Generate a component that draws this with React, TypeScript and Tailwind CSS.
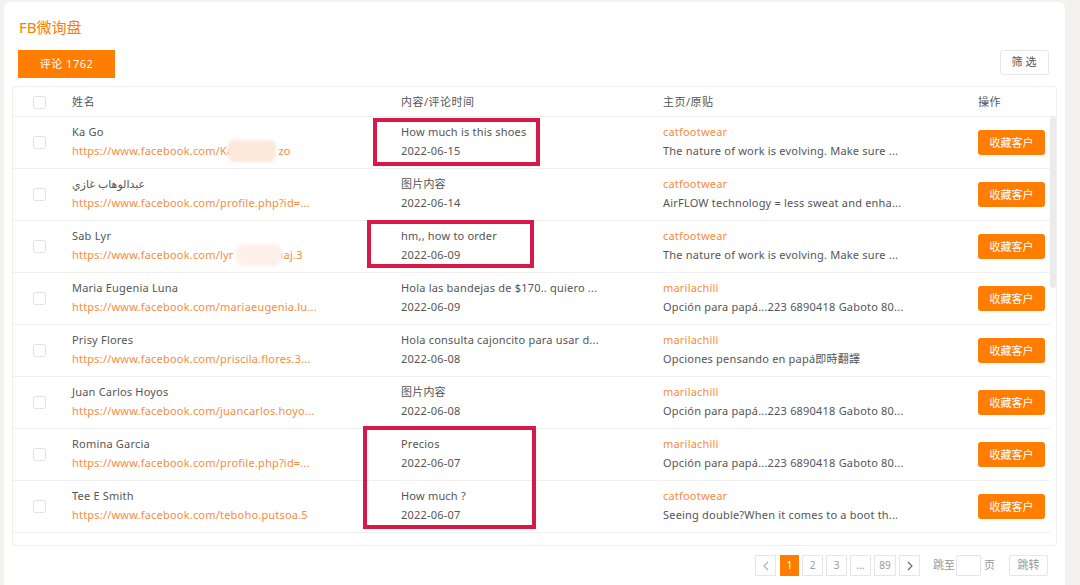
import React from 'react';

type Row = {
  name: string;
  url: React.ReactNode;
  content: string;
  date: string;
  page: string;
  post: string;
};

// hidden part of a profile url (covered by a blur patch in the screenshot)
const Gap = ({ w }: { w: string }) => <span className={`inline-block ${w}`} />;

const ROWS: Row[] = [
  { name: 'Ka Go', url: <>https://www.facebook.com/Ka<Gap w="w-[45px]" />zo</>, content: 'How much is this shoes', date: '2022-06-15', page: 'catfootwear', post: 'The nature of work is evolving. Make sure ...' },
  { name: 'عبدالوهاب غازي', url: 'https://www.facebook.com/profile.php?id=...', content: '图片内容', date: '2022-06-14', page: 'catfootwear', post: 'AirFLOW technology = less sweat and enha...' },
  { name: 'Sab Lyr', url: <>https://www.facebook.com/lyr<Gap w="w-[43px]" />naj.3</>, content: 'hm,, how to order', date: '2022-06-09', page: 'catfootwear', post: 'The nature of work is evolving. Make sure ...' },
  { name: 'Maria Eugenia Luna', url: 'https://www.facebook.com/mariaeugenia.lu...', content: 'Hola las bandejas de $170.. quiero ...', date: '2022-06-09', page: 'marilachili', post: 'Opción para papá...223 6890418 Gaboto 80...' },
  { name: 'Prisy Flores', url: 'https://www.facebook.com/priscila.flores.3...', content: 'Hola consulta cajoncito para usar d...', date: '2022-06-08', page: 'marilachili', post: 'Opciones pensando en papá即時翻譯' },
  { name: 'Juan Carlos Hoyos', url: 'https://www.facebook.com/juancarlos.hoyo...', content: '图片内容', date: '2022-06-08', page: 'marilachili', post: 'Opción para papá...223 6890418 Gaboto 80...' },
  { name: 'Romina Garcia', url: 'https://www.facebook.com/profile.php?id=...', content: 'Precios', date: '2022-06-07', page: 'marilachili', post: 'Opción para papá...223 6890418 Gaboto 80...' },
  { name: 'Tee E Smith', url: 'https://www.facebook.com/teboho.putsoa.5', content: 'How much ?', date: '2022-06-07', page: 'catfootwear', post: 'Seeing double?When it comes to a boot th...' },
];

const cols = 'grid grid-cols-[59px_329px_262px_315px_1fr]';

const Checkbox = () => (
  <span className="block h-[13px] w-[13px] rounded-[2px] border border-[#e3e3e3] bg-white" />
);

export default function App() {
  return (
    <div className="relative h-[585px] w-[1080px] overflow-hidden bg-[#f4f2ee] pl-[4px] pr-[15px] pt-[2px] font-['Noto_Sans','Noto_Sans_CJK_SC','DejaVu_Sans',sans-serif] text-[11px] text-[#555]">
      <div className="h-[600px] rounded-[6px] bg-white px-[8px]">
        {/* title */}
        <div className="flex h-[48px] items-center pl-[7px] pt-[2px] text-[15px] text-[#ff7d00]">FB微询盘</div>

        {/* tabs + filter */}
        <div className="flex h-[36px] items-start justify-between pl-[6px] pr-[8px]">
          <div className="flex h-[28px] w-[97px] items-center justify-center bg-[#ff7d00] tracking-[0.5px] text-white">评论 1762</div>
          <button className="h-[25px] w-[49px] rounded-[3px] border border-[#e6e6e6] bg-white pl-[2px] tracking-[3px] text-[#555]">筛选</button>
        </div>

        {/* table */}
        <div className="relative flex h-[460px] flex-col rounded-[4px] border border-[#eeeeee]">
          <div className={`${cols} h-[30px] shrink-0 items-center border-b border-[#eeeeee] pr-[6px] pt-[2px]`}>
            <div className="pl-[20px]"><Checkbox /></div>
            <div className="tracking-[0.5px]">姓名</div>
            <div className="tracking-[0.5px]">内容/评论时间</div>
            <div className="tracking-[0.5px]">主页/原贴</div>
            <div className="tracking-[0.5px]">操作</div>
          </div>
          <div className="flex-1 overflow-hidden pr-[6px]">
            {ROWS.map((r, i) => (
              <div key={i} className={`${cols} h-[52px] border-b border-[#f0f0f0] leading-[19px] tracking-[0.2px]`}>
                <div className="self-center pl-[20px]"><Checkbox /></div>
                <div className="pt-[5px]">
                  <div className="whitespace-nowrap text-[#555]">{r.name}</div>
                  <div className="whitespace-nowrap text-[#fa8b3c]">{r.url}</div>
                </div>
                <div className="pt-[5px]">
                  <div className="whitespace-nowrap">{r.content}</div>
                  <div className="whitespace-nowrap">{r.date}</div>
                </div>
                <div className="pt-[5px]">
                  <div className="whitespace-nowrap text-[#fa8b3c]">{r.page}</div>
                  <div className="whitespace-nowrap">{r.post}</div>
                </div>
                <div className="self-center">
                  <button className="h-[25px] w-[67px] rounded-[3px] bg-[#ff7d00] text-[11px] tracking-normal text-white">收藏客户</button>
                </div>
              </div>
            ))}
          </div>
          {/* scrollbar thumb */}
          <div className="absolute right-[0px] top-[30px] h-[171px] w-[6px] rounded-[3px] bg-[#ebebeb]" />
        </div>

        {/* pagination */}
        <div className="mt-[9px] flex items-center justify-end pr-[9px] text-[#999]">
          <div className="flex items-center gap-[3px]">
            <span className="flex h-[21px] w-[21px] items-center justify-center border border-[#e6e6e6]">
              <svg width="8" height="10" viewBox="0 0 8 10" fill="none" stroke="#aaa" strokeWidth="1.1"><path d="M6 1L2 5l4 4" /></svg>
            </span>
            <span className="ml-[1px] flex h-[21px] w-[19px] items-center justify-center bg-[#ff7d00] text-[10px] text-white">1</span>
            <span className="flex h-[21px] w-[21px] items-center justify-center border border-[#e6e6e6] text-[10px]">2</span>
            <span className="flex h-[21px] w-[21px] items-center justify-center border border-[#e6e6e6] text-[10px]">3</span>
            <span className="flex h-[21px] w-[21px] items-center justify-center border border-[#e6e6e6] text-[10px]">...</span>
            <span className="flex h-[21px] w-[22px] items-center justify-center border border-[#e6e6e6] text-[10px]">89</span>
            <span className="flex h-[21px] w-[21px] items-center justify-center border border-[#e6e6e6]">
              <svg width="8" height="10" viewBox="0 0 8 10" fill="none" stroke="#666" strokeWidth="1.1"><path d="M2 1l4 4-4 4" /></svg>
            </span>
          </div>
          <span className="ml-[13px]">跳至</span>
          <span className="ml-[1px] h-[21px] w-[25px] rounded-[2px] border border-[#e6e6e6]" />
          <span className="ml-[3px]">页</span>
          <button className="ml-[14px] h-[21px] w-[39px] rounded-[2px] border border-[#e6e6e6] text-[#999]">跳转</button>
        </div>
      </div>

      {/* privacy blur patches */}
      <div className="absolute left-[228px] top-[140px] h-[22px] w-[48px] rounded-[6px] bg-[#fde8dc] blur-[1.5px]" />
      <div className="absolute left-[236px] top-[244px] h-[22px] w-[46px] rounded-[8px] bg-[#fff1e9] blur-[1.5px]" />

      {/* red highlight annotations */}
      <div className="absolute left-[373px] top-[118px] h-[48px] w-[167px] border-[4px] border-[#d7194a]" />
      <div className="absolute left-[367px] top-[220px] h-[48px] w-[167px] border-[4px] border-[#d7194a]" />
      <div className="absolute left-[363px] top-[426px] h-[103px] w-[173px] border-[4px] border-[#d7194a]" />
    </div>
  );
}
